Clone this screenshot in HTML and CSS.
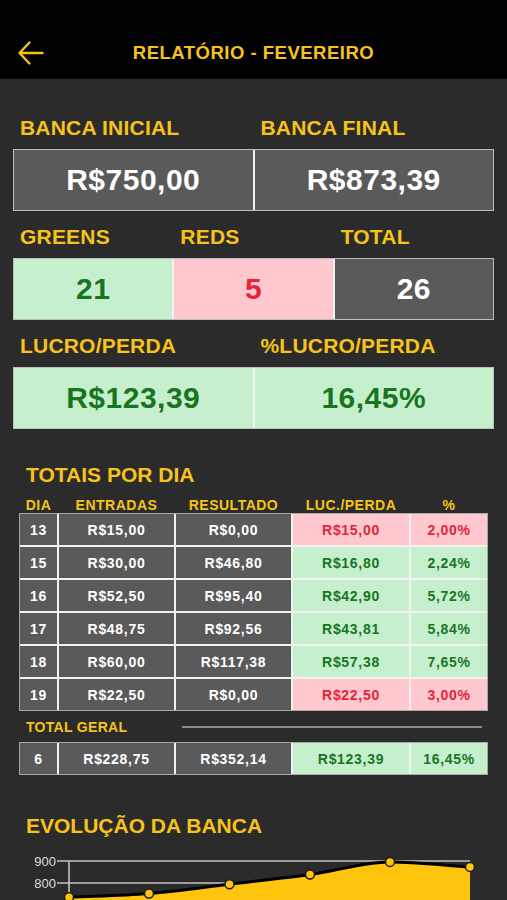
FILE: index.html
```html
<!DOCTYPE html>
<html lang="pt-BR">
  <head>
    <meta charset="UTF-8" />
    <meta name="viewport" content="width=device-width, initial-scale=1.0" />
    <title>Relatório - Fevereiro</title>
    <link rel="stylesheet" href="styles.css">
  </head>
  <body>
    <header class="topbar">
      <svg class="back" width="26" height="24" viewBox="0 0 26 24">
        <path d="M24.5 12H2M11.5 1.5L1.5 12L11.5 22.5" fill="none" stroke="#f7c31a" stroke-width="2.4" stroke-linecap="round" stroke-linejoin="round" />
      </svg>
      <h1 class="title">RELATÓRIO - FEVEREIRO</h1>
      <span></span>
    </header>

    <main class="report">
      <section class="stat">
        <div class="stat-labels two">
          <span>BANCA INICIAL</span>
          <span>BANCA FINAL</span>
        </div>
        <div class="stat-box two">
          <div class="cell gray">R$750,00</div>
          <div class="cell gray">R$873,39</div>
        </div>
      </section>

      <section class="stat">
        <div class="stat-labels three">
          <span>GREENS</span>
          <span>REDS</span>
          <span>TOTAL</span>
        </div>
        <div class="stat-box three">
          <div class="cell green">21</div>
          <div class="cell red">5</div>
          <div class="cell gray">26</div>
        </div>
      </section>

      <section class="stat">
        <div class="stat-labels two">
          <span>LUCRO/PERDA</span>
          <span>%LUCRO/PERDA</span>
        </div>
        <div class="stat-box two">
          <div class="cell green">R$123,39</div>
          <div class="cell green">16,45%</div>
        </div>
      </section>

      <section class="daily">
        <h2 class="section-title">TOTAIS POR DIA</h2>
        <div class="cols">
          <span>DIA</span>
          <span>ENTRADAS</span>
          <span>RESULTADO</span>
          <span>LUC./PERDA</span>
          <span>%</span>
        </div>
        <div class="day-table">
          <div class="gray">13</div><div class="gray">R$15,00</div><div class="gray">R$0,00</div><div class="red">R$15,00</div><div class="red">2,00%</div>
          <div class="gray">15</div><div class="gray">R$30,00</div><div class="gray">R$46,80</div><div class="green">R$16,80</div><div class="green">2,24%</div>
          <div class="gray">16</div><div class="gray">R$52,50</div><div class="gray">R$95,40</div><div class="green">R$42,90</div><div class="green">5,72%</div>
          <div class="gray">17</div><div class="gray">R$48,75</div><div class="gray">R$92,56</div><div class="green">R$43,81</div><div class="green">5,84%</div>
          <div class="gray">18</div><div class="gray">R$60,00</div><div class="gray">R$117,38</div><div class="green">R$57,38</div><div class="green">7,65%</div>
          <div class="gray">19</div><div class="gray">R$22,50</div><div class="gray">R$0,00</div><div class="red">R$22,50</div><div class="red">3,00%</div>
        </div>

        <div class="total-head">
          <span>TOTAL GERAL</span>
          <i class="rule"></i>
        </div>
        <div class="day-table total">
          <div class="gray">6</div><div class="gray">R$228,75</div><div class="gray">R$352,14</div><div class="green">R$123,39</div><div class="green">16,45%</div>
        </div>
      </section>

      <section class="chart">
        <h2 class="section-title">EVOLUÇÃO DA BANCA</h2>
        <!-- escala: 100 = 22px, 900 em y=861 -->
        <svg class="plot" width="469" height="62" viewBox="19 838 469 62">
          <g class="axis-labels">
            <text x="56" y="865.5">900</text>
            <text x="56" y="887.5">800</text>
            <text x="56" y="909.5">700</text>
          </g>
          <g stroke="#c4c4c4" stroke-width="1.6">
            <line x1="57" y1="861" x2="470" y2="861" />
            <line x1="57" y1="883" x2="470" y2="883" />
            <line x1="57" y1="905" x2="470" y2="905" />
            <line x1="69" y1="861" x2="69" y2="920" />
          </g>
          <path d="M69 897.3C95.7 896.1 122.3 895.8 149 893.6C175.8 891.4 202.7 887.4 229.5 884.2C256.3 881 283.2 878.2 310 874.5C336.7 870.8 363.3 861.9 390 861.9C416.7 861.9 443.3 865.2 470 866.9L470 930L69 930Z" fill="#ffc40c" />
          <path d="M69 897.3C95.7 896.1 122.3 895.8 149 893.6C175.8 891.4 202.7 887.4 229.5 884.2C256.3 881 283.2 878.2 310 874.5C336.7 870.8 363.3 861.9 390 861.9C416.7 861.9 443.3 865.2 470 866.9" fill="none" stroke="#000" stroke-width="3" />
          <g fill="#ffc40c" stroke="#1c1c1c" stroke-width="1.5">
            <circle cx="69" cy="897.3" r="4.5" />
            <circle cx="149" cy="893.6" r="4.5" />
            <circle cx="229.5" cy="884.2" r="4.5" />
            <circle cx="310" cy="874.5" r="4.5" />
            <circle cx="390" cy="861.9" r="4.5" />
            <circle cx="470" cy="866.9" r="4.5" />
          </g>
        </svg>
      </section>
    </main>
  </body>
</html>
```

FILE: styles.css
```css
body {
  margin: 0;
  background-color: #2b2b2b;
  font-family: "Liberation Sans", Arial, sans-serif;
  color: #fff;
}

.topbar {
  display: grid;
  grid-template-columns: 1fr auto 1fr;
  align-items: center;
  height: 79px;
  box-sizing: border-box;
  padding: 26px 18px 0;
  background-color: #000;
}

.back {
  display: block;
}

.title {
  margin: 0;
  font-size: 18.5px;
  font-weight: bold;
  letter-spacing: 0.5px;
  color: #f7c31a;
}

.report {
  padding: 37px 13px 0;
}

.stat + .stat {
  margin-top: 14px;
}

.stat-labels,
.stat-box {
  display: grid;
  gap: 2px;
}

.two {
  grid-template-columns: 1fr 1fr;
}

.three {
  grid-template-columns: 1fr 1fr 1fr;
}

.stat-labels {
  padding: 0 1px;
  margin-bottom: 9px;
  font-size: 21px;
  line-height: 24px;
  font-weight: bold;
  letter-spacing: 0.2px;
  color: #f7c31a;
}

.stat-labels span {
  padding-left: 6px;
}

.stat-box {
  height: 62px;
  box-sizing: border-box;
  border: 1px solid #bdbdbd;
  background-color: #f2f2f2;
}

.cell {
  display: flex;
  align-items: center;
  justify-content: center;
  font-size: 30px;
  font-weight: bold;
  letter-spacing: 0.5px;
}

.gray {
  background-color: #5a5a5a;
  color: #fff;
}

.green {
  background-color: #c6efce;
  color: #17761f;
}

.red {
  background-color: #ffc7ce;
  color: #e3243b;
}

.daily {
  margin-top: 34px;
  padding: 0 6px;
}

.section-title {
  margin: 0;
  padding-left: 7px;
  font-size: 21px;
  line-height: 24px;
  font-weight: bold;
  color: #f7c31a;
}

.cols,
.day-table {
  display: grid;
  grid-template-columns: 37px 115px 115px 116px 1fr;
  gap: 2px;
}

.cols {
  margin-top: 10px;
  padding: 0 1px;
  font-size: 14px;
  line-height: 16px;
  font-weight: bold;
  letter-spacing: 0.5px;
  text-align: center;
  color: #f7c31a;
}

.day-table {
  border: 1px solid #a8a8a8;
  background-color: #f2f2f2;
}

.day-table > div {
  display: flex;
  align-items: center;
  justify-content: center;
  height: 31px;
  font-size: 14px;
  font-weight: bold;
  letter-spacing: 0.7px;
}

.total-head {
  display: flex;
  align-items: center;
  margin-top: 8px;
  height: 16px;
  font-size: 14px;
  font-weight: bold;
  letter-spacing: 0.3px;
  color: #f7c31a;
}

.total-head span {
  width: 163px;
  padding-left: 7px;
  box-sizing: border-box;
}

.rule {
  flex: 1;
  margin-right: 6px;
  border-top: 2px solid #8a8a8a;
}

.day-table.total {
  margin-top: 7px;
}

.chart {
  margin-top: 39px;
  padding: 0 6px;
}

.plot {
  display: block;
}

.axis-labels text {
  font-size: 13px;
  fill: #dedede;
  text-anchor: end;
}
```
